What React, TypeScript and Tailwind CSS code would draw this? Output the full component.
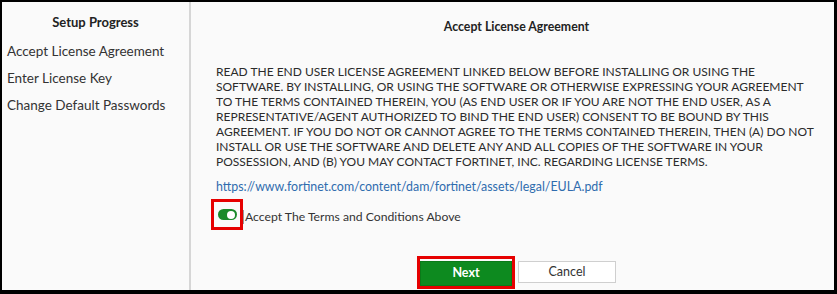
const steps = ['Accept License Agreement', 'Enter License Key', 'Change Default Passwords'];

const eulaLines = [
  'READ THE END USER LICENSE AGREEMENT LINKED BELOW BEFORE INSTALLING OR USING THE',
  'SOFTWARE. BY INSTALLING, OR USING THE SOFTWARE OR OTHERWISE EXPRESSING YOUR AGREEMENT',
  'TO THE TERMS CONTAINED THEREIN, YOU (AS END USER OR IF YOU ARE NOT THE END USER, AS A',
  'REPRESENTATIVE/AGENT AUTHORIZED TO BIND THE END USER) CONSENT TO BE BOUND BY THIS',
  'AGREEMENT. IF YOU DO NOT OR CANNOT AGREE TO THE TERMS CONTAINED THEREIN, THEN (A) DO NOT',
  'INSTALL OR USE THE SOFTWARE AND DELETE ANY AND ALL COPIES OF THE SOFTWARE IN YOUR',
  'POSSESSION, AND (B) YOU MAY CONTACT FORTINET, INC. REGARDING LICENSE TERMS.',
];

export default function App() {
  return (
    <div
      className="w-[837px] h-[294px] flex bg-[#fafafa] border-black border-t-2 border-l-2 border-r-[3px] border-b-4 text-[#333] overflow-hidden"
      style={{ fontFamily: 'Lato, "Open Sans", sans-serif' }}
    >
      {/* Sidebar */}
      <div className="w-[189px] shrink-0 border-r-2 border-[#d6d6d6] pt-[11px]">
        <div className="text-center text-[13px] font-bold text-[#222] leading-[18px]">Setup Progress</div>
        <div className="mt-[7px] pl-[5px] text-[13.5px] leading-[27px] text-[#333]">
          {steps.map((s) => (
            <div key={s}>{s}</div>
          ))}
        </div>
      </div>

      {/* Main */}
      <div className="flex-1 flex flex-col">
        <div className="text-center text-[12.3px] font-bold text-[#222] leading-[18px] pt-[16px] pl-[8px]">
          Accept License Agreement
        </div>

        <div className="pl-[25px] mt-[28px] text-[12px] leading-[15px] text-[#2b2b2b] whitespace-nowrap">
          {eulaLines.map((l) => (
            <div key={l}>{l}</div>
          ))}
        </div>

        <a className="pl-[25px] mt-[9px] text-[12.4px] leading-[18px] text-[#2f6cae]">
          https://www.fortinet.com/content/dam/fortinet/assets/legal/EULA.pdf
        </a>

        <div className="flex items-center mt-[3px] pl-[20px]">
          <div className="w-[32px] h-[31px] border-[3px] border-[#e60000] flex items-center justify-center">
            <div className="w-[19px] h-[11px] rounded-full bg-[#1a8a2a] flex items-center justify-end pr-[2px]">
              <div className="w-[8px] h-[8px] rounded-full bg-white" />
            </div>
          </div>
          <div className="w-px h-[14px] mt-[5px] bg-[#999]" />
          <span className="ml-[1px] pt-[5px] text-[12.2px] text-[#333]">Accept The Terms and Conditions Above</span>
        </div>

        <div className="flex justify-center items-center gap-[3px] mt-[26px] pl-[8px]">
          <div className="border-[3px] border-[#e60000]">
            <button className="w-[92px] h-[25px] bg-[#0d8a1f] text-white text-[12.5px] font-bold border border-[#0a7a18]">
              Next
            </button>
          </div>
          <button className="w-[98px] h-[22px] bg-white border border-[#cfcfcf] text-[12.5px] text-[#333]">
            Cancel
          </button>
        </div>
      </div>
    </div>
  );
}
